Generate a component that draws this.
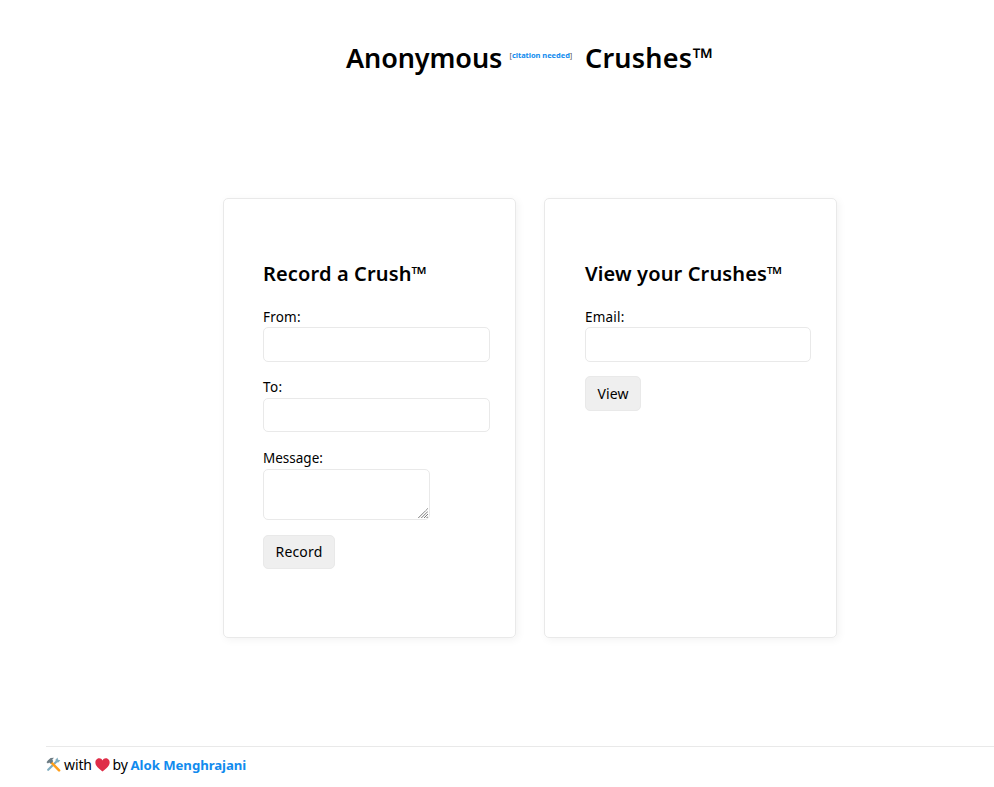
<div class="page">
  <header>
    <h1><span class="first">Anonymous</span><sup>[<a href="#citation">citation needed</a>]</sup><span class="second">Crushes™</span></h1>
  </header>

  <main>
    <section class="card">
      <h2>Record a Crush™</h2>
      <form>
        <label><span>From:</span><input type="text" /></label>
        <label><span class="to">To:</span><input type="text" class="short" /></label>
        <label>
          <span class="message">Message:</span>
          <div class="area">
            <textarea></textarea>
            <svg class="grip" viewBox="0 0 10 10">
              <path d="M.3 10 10 .3M3.3 10 10 3.3M6 10 10 6M8.5 10 10 8.5" stroke="#555" stroke-width="1" stroke-dasharray="1.1 .4" />
            </svg>
          </div>
        </label>
        <button type="button" class="record">Record</button>
      </form>
    </section>
    <section class="card">
      <h2>View your Crushes™</h2>
      <form>
        <label><span>Email:</span><input type="text" /></label>
        <button type="button" class="view">View</button>
      </form>
    </section>
  </main>

  <footer>
    <svg class="tools" viewBox="0 0 15 15" aria-label="tools">
      <path d="M2.2 12.8 10.8 4.2" stroke="#82aec0" stroke-width="2.2" stroke-linecap="round" />
      <path d="M10 5.1 9.4 2.7 11.6.5l.4 2.3 2.3.5-2 2.2z" fill="#82aec0" />
      <path d="m5.5 5.6 7.6 7.8" stroke="#ff9f1c" stroke-width="2.5" stroke-linecap="round" />
      <path d="M.5 5.2 1.8 3.5 4.6 1.1 8 .8 6.3 2.6l.9 1.7-2.5 2.4-1.5-1.3-1.3 1.1z" fill="#6c7b83" />
    </svg>
    <span class="with">with</span>
    <svg class="heart" viewBox="0 0 15 14" aria-label="love">
      <path d="M7.5 2.5C6.6.3 4.2-.2 2.4.8.1 2-.1 5 1.1 7.2 2.5 9.8 5 11.5 7.5 13.5c2.5-2 5-3.7 6.4-6.3C15.1 5 14.9 2 12.6.8 10.8-.2 8.4.3 7.5 2.5z" fill="#df2d48" />
    </svg>
    <span class="by">by</span>
    <a class="author" href="#author">Alok Menghrajani</a>
  </footer>
</div>

<style>
  :global(body) {
    margin: 0;
    background: #fff;
  }

  .page {
    box-sizing: border-box;
    height: 787px;
    padding-left: 46px;
    display: flex;
    flex-direction: column;
    overflow: hidden;
    color: #000;
    font-family: "Noto Sans", sans-serif;
    font-size: 14px;
  }

  header {
    height: 198px;
    box-sizing: border-box;
    padding: 38px 0 0 300px;
  }

  h1 {
    display: flex;
    margin: 0;
    font-size: 27px;
    font-weight: 650;
    line-height: 40px;
    white-space: nowrap;
  }

  .first {
    width: 163.5px;
    letter-spacing: -0.1px;
  }

  .second {
    letter-spacing: 0.2px;
  }

  sup {
    width: 75.5px;
    font-size: 7.5px;
    line-height: 35px;
    font-weight: 400;
    letter-spacing: -0.05px;
    color: #555;
  }

  a {
    color: #118bee;
    font-weight: 700;
    text-decoration: none;
  }

  main {
    display: flex;
    gap: 28px;
    margin-left: 177px;
  }

  .card {
    box-sizing: border-box;
    width: 293px;
    height: 440px;
    padding: 60px 25px 0 39px;
    border: 1px solid #e9e9e9;
    border-radius: 5px;
    box-shadow: 2px 2px 8px #0000000d;
  }

  .card + .card {
    padding-left: 40px;
  }

  h2 {
    margin: 0 0 18px;
    font-size: 20px;
    font-weight: 650;
    line-height: 30px;
    letter-spacing: 0.14px;
    white-space: nowrap;
  }

  form {
    display: flex;
    flex-direction: column;
    align-items: flex-start;
  }

  label {
    display: flex;
    flex-direction: column;
    align-items: flex-start;
    width: 100%;
    line-height: 20px;
  }

  label span {
    display: block;
    font-size: 13.5px;
    letter-spacing: 0.2px;
  }

  input,
  textarea,
  button {
    box-sizing: border-box;
    margin: 0;
    border: 1px solid #e9e9e9;
    border-radius: 5px;
    font: 14px "Noto Sans", sans-serif;
  }

  input {
    width: 100%;
    height: 35px;
    margin-bottom: 15px;
    background: #fff;
  }

  .short {
    height: 34px;
    margin-bottom: 16px;
  }

  .to {
    margin-bottom: 1px;
    letter-spacing: 0.4px;
  }

  .message {
    margin-bottom: 1px;
    letter-spacing: 0;
  }

  .card + .card input {
    margin-bottom: 14px;
  }

  .area {
    position: relative;
    width: 167px;
    height: 51px;
    margin-bottom: 15px;
  }

  textarea {
    display: block;
    width: 100%;
    height: 100%;
    background: #fff;
    resize: none;
  }

  .grip {
    position: absolute;
    right: 2px;
    bottom: 2px;
    width: 10px;
    height: 10px;
  }

  button {
    height: 34px;
    padding: 0;
    background: #efefef;
    color: #000;
    letter-spacing: 0.15px;
  }

  .record {
    width: 72px;
    padding-bottom: 1px;
  }

  .view {
    width: 56px;
    height: 35px;
  }

  footer {
    display: flex;
    margin-top: 108px;
    padding-top: 8px;
    border-top: 1px solid #e9e9e9;
    line-height: 20px;
    white-space: nowrap;
  }

  svg {
    flex: none;
    fill: none;
  }

  .tools {
    width: 15px;
    height: 15px;
    margin: 2px 3px 0 0;
  }

  .with {
    width: 30.5px;
    letter-spacing: -0.1px;
  }

  .heart {
    width: 15px;
    height: 14px;
    margin-top: 3px;
  }

  .by {
    width: 18px;
    margin-left: 3px;
    letter-spacing: -0.2px;
  }

  .author {
    font-size: 13.2px;
    letter-spacing: -0.05px;
  }
</style>
